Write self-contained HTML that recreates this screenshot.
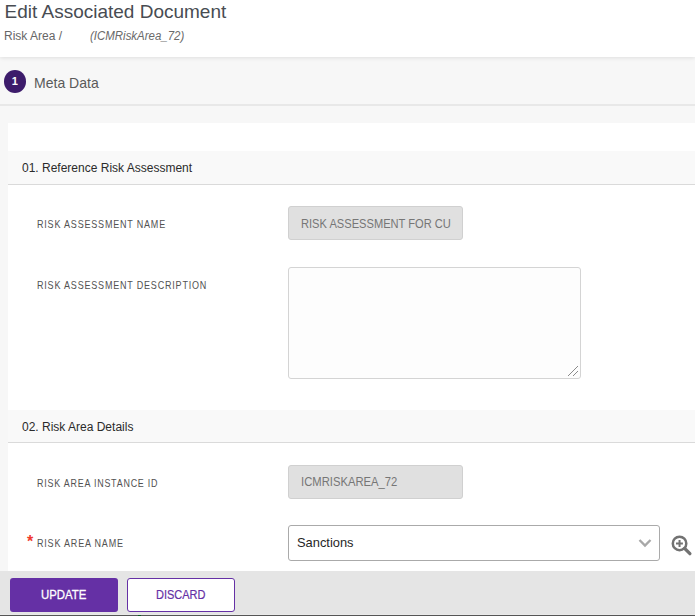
<!DOCTYPE html>
<html>
<head>
<meta charset="utf-8">
<title>Edit Associated Document</title>
<style>
html,body{margin:0;padding:0;}
body{width:695px;height:616px;overflow:hidden;position:relative;background:#f7f7f7;font-family:"Liberation Sans",sans-serif;color:#333;}
.abs{position:absolute;}
.t{position:absolute;white-space:nowrap;transform-origin:0 0;line-height:1;}
#hdr{left:0;top:0;width:695px;height:57px;background:#fff;box-shadow:0 1px 4px rgba(0,0,0,.10);}
#title{left:4.5px;top:2px;font-size:19px;color:#484c52;}
#sub1{left:4px;top:30.4px;font-size:12px;color:#666;}
#sub2{left:89.5px;top:30.4px;font-size:12px;color:#6a6a6a;font-style:italic;transform:scaleX(.955);}
#stepline{left:0;top:104px;width:695px;height:2px;background:#e8e8e8;}
#circle{left:4px;top:70px;width:22.4px;height:23px;border-radius:50%;background:#3d1c6b;}
#one{left:11.8px;top:76.3px;font-size:11px;font-weight:bold;color:#fff;}
#meta{left:34px;top:75px;font-size:15px;color:#5a5a5a;transform:scaleX(.935);}
#panel{left:8px;top:123px;width:687px;height:448px;background:#fff;}
.sec{left:8px;width:687px;height:33px;background:#f9f9f9;border-bottom:1px solid #dadada;}
.sect{font-size:12px;color:#2b2b2b;left:22px;}
.lbl{font-size:11.4px;color:#525252;left:36.7px;letter-spacing:1px;transform:scaleX(.792);}
.dis{left:288px;width:173px;height:32px;background:#e0e0e0;border:1px solid #d0d0d0;border-radius:3px;}
.dist{font-size:13px;color:#767676;left:301.4px;transform:scaleX(.855);}
#ta{left:288px;top:267px;width:291px;height:110px;background:#fdfdfd;border:1px solid #d4d4d4;border-radius:3px;}
#sel{left:288px;top:525px;width:370px;height:34px;background:#fff;border:1px solid #aaa;border-radius:3px;}
#selt{left:297.4px;top:536px;font-size:13px;color:#262626;transform:scaleX(.99);}
#foot{left:0;top:571px;width:695px;height:45px;background:#e5e5e5;}
#btn1{left:10px;top:578px;width:108px;height:34px;background:#6530a5;border-radius:3px;}
#btn2{left:127px;top:578px;width:106px;height:32px;background:#fff;border:1px solid #6530a5;border-radius:3px;}
#b1t{left:41px;top:589px;font-size:12.5px;color:#fff;-webkit-text-stroke:.3px #fff;transform:scaleX(.91);}
#b2t{left:156.3px;top:589px;font-size:12.5px;color:#6530a5;-webkit-text-stroke:.2px #6530a5;transform:scaleX(.88);}
#botline{left:0;top:615px;width:695px;height:1px;background:#555;}
#botline2{left:0;top:614px;width:695px;height:1px;background:#e9e9e9;}
#star{left:27px;top:534.3px;font-size:16px;color:#f03a2e;font-weight:bold;}
</style>
</head>
<body>
<div class="abs" id="hdr"></div>
<div class="t" id="title">Edit Associated Document</div>
<div class="t" id="sub1">Risk Area /</div>
<div class="t" id="sub2">(ICMRiskArea_72)</div>

<div class="abs" id="stepline"></div>
<div class="abs" id="circle"></div>
<div class="t" id="one">1</div>
<div class="t" id="meta">Meta Data</div>

<div class="abs" id="panel"></div>

<div class="abs sec" style="top:151px"></div>
<div class="t sect" id="s1t" style="top:162px">01. Reference Risk Assessment</div>

<div class="t lbl" id="l1" style="top:218.5px">RISK ASSESSMENT NAME</div>
<div class="abs dis" style="top:206px"></div>
<div class="t dist" id="d1" style="top:216.5px">RISK ASSESSMENT FOR CU</div>

<div class="t lbl" id="l2" style="top:279.6px">RISK ASSESSMENT DESCRIPTION</div>
<div class="abs" id="ta"></div>
<svg class="abs" style="left:565px;top:363px" width="16" height="16" viewBox="0 0 16 16"><path d="M3 13 L13 3 M8 13 L13 8" stroke="#8a8a8a" stroke-width="1" fill="none"/></svg>

<div class="abs sec" style="top:410px;height:32px"></div>
<div class="t sect" id="s2t" style="top:421px">02. Risk Area Details</div>

<div class="t lbl" id="l3" style="top:477.6px;transform:scaleX(.783)">RISK AREA INSTANCE ID</div>
<div class="abs dis" style="top:465px"></div>
<div class="t dist" id="d2" style="top:474.7px;transform:scaleX(.866)">ICMRISKAREA_72</div>

<div class="t" id="star">*</div>
<div class="t lbl" id="l4" style="top:537.6px">RISK AREA NAME</div>
<div class="abs" id="sel"></div>
<div class="t" id="selt">Sanctions</div>
<svg class="abs" style="left:637px;top:537px" width="16" height="12" viewBox="0 0 16 12"><path d="M2.5 3 L8 8.5 L13.5 3" stroke="#a8a8a8" stroke-width="2.4" fill="none"/></svg>
<svg class="abs" id="mag" style="left:665px;top:528px" width="30" height="34" viewBox="0 0 30 34"><circle cx="14.55" cy="15.4" r="6.75" stroke="#727272" stroke-width="2.5" fill="none"/><path d="M19.6 20.4 L24.9 25.7" stroke="#727272" stroke-width="3.3" stroke-linecap="round"/><path d="M14.55 11.9 V19 M11 15.4 H17.9" stroke="#727272" stroke-width="2"/></svg>

<div class="abs" id="foot"></div>
<div class="abs" id="btn1"></div>
<div class="abs" id="btn2"></div>
<div class="t" id="b1t">UPDATE</div>
<div class="t" id="b2t">DISCARD</div>
<div class="abs" id="botline2"></div>
<div class="abs" id="botline"></div>
<div class="abs" style="left:138px;top:615px;width:3px;height:1px;background:#0b5a20"></div>
</body>
</html>
